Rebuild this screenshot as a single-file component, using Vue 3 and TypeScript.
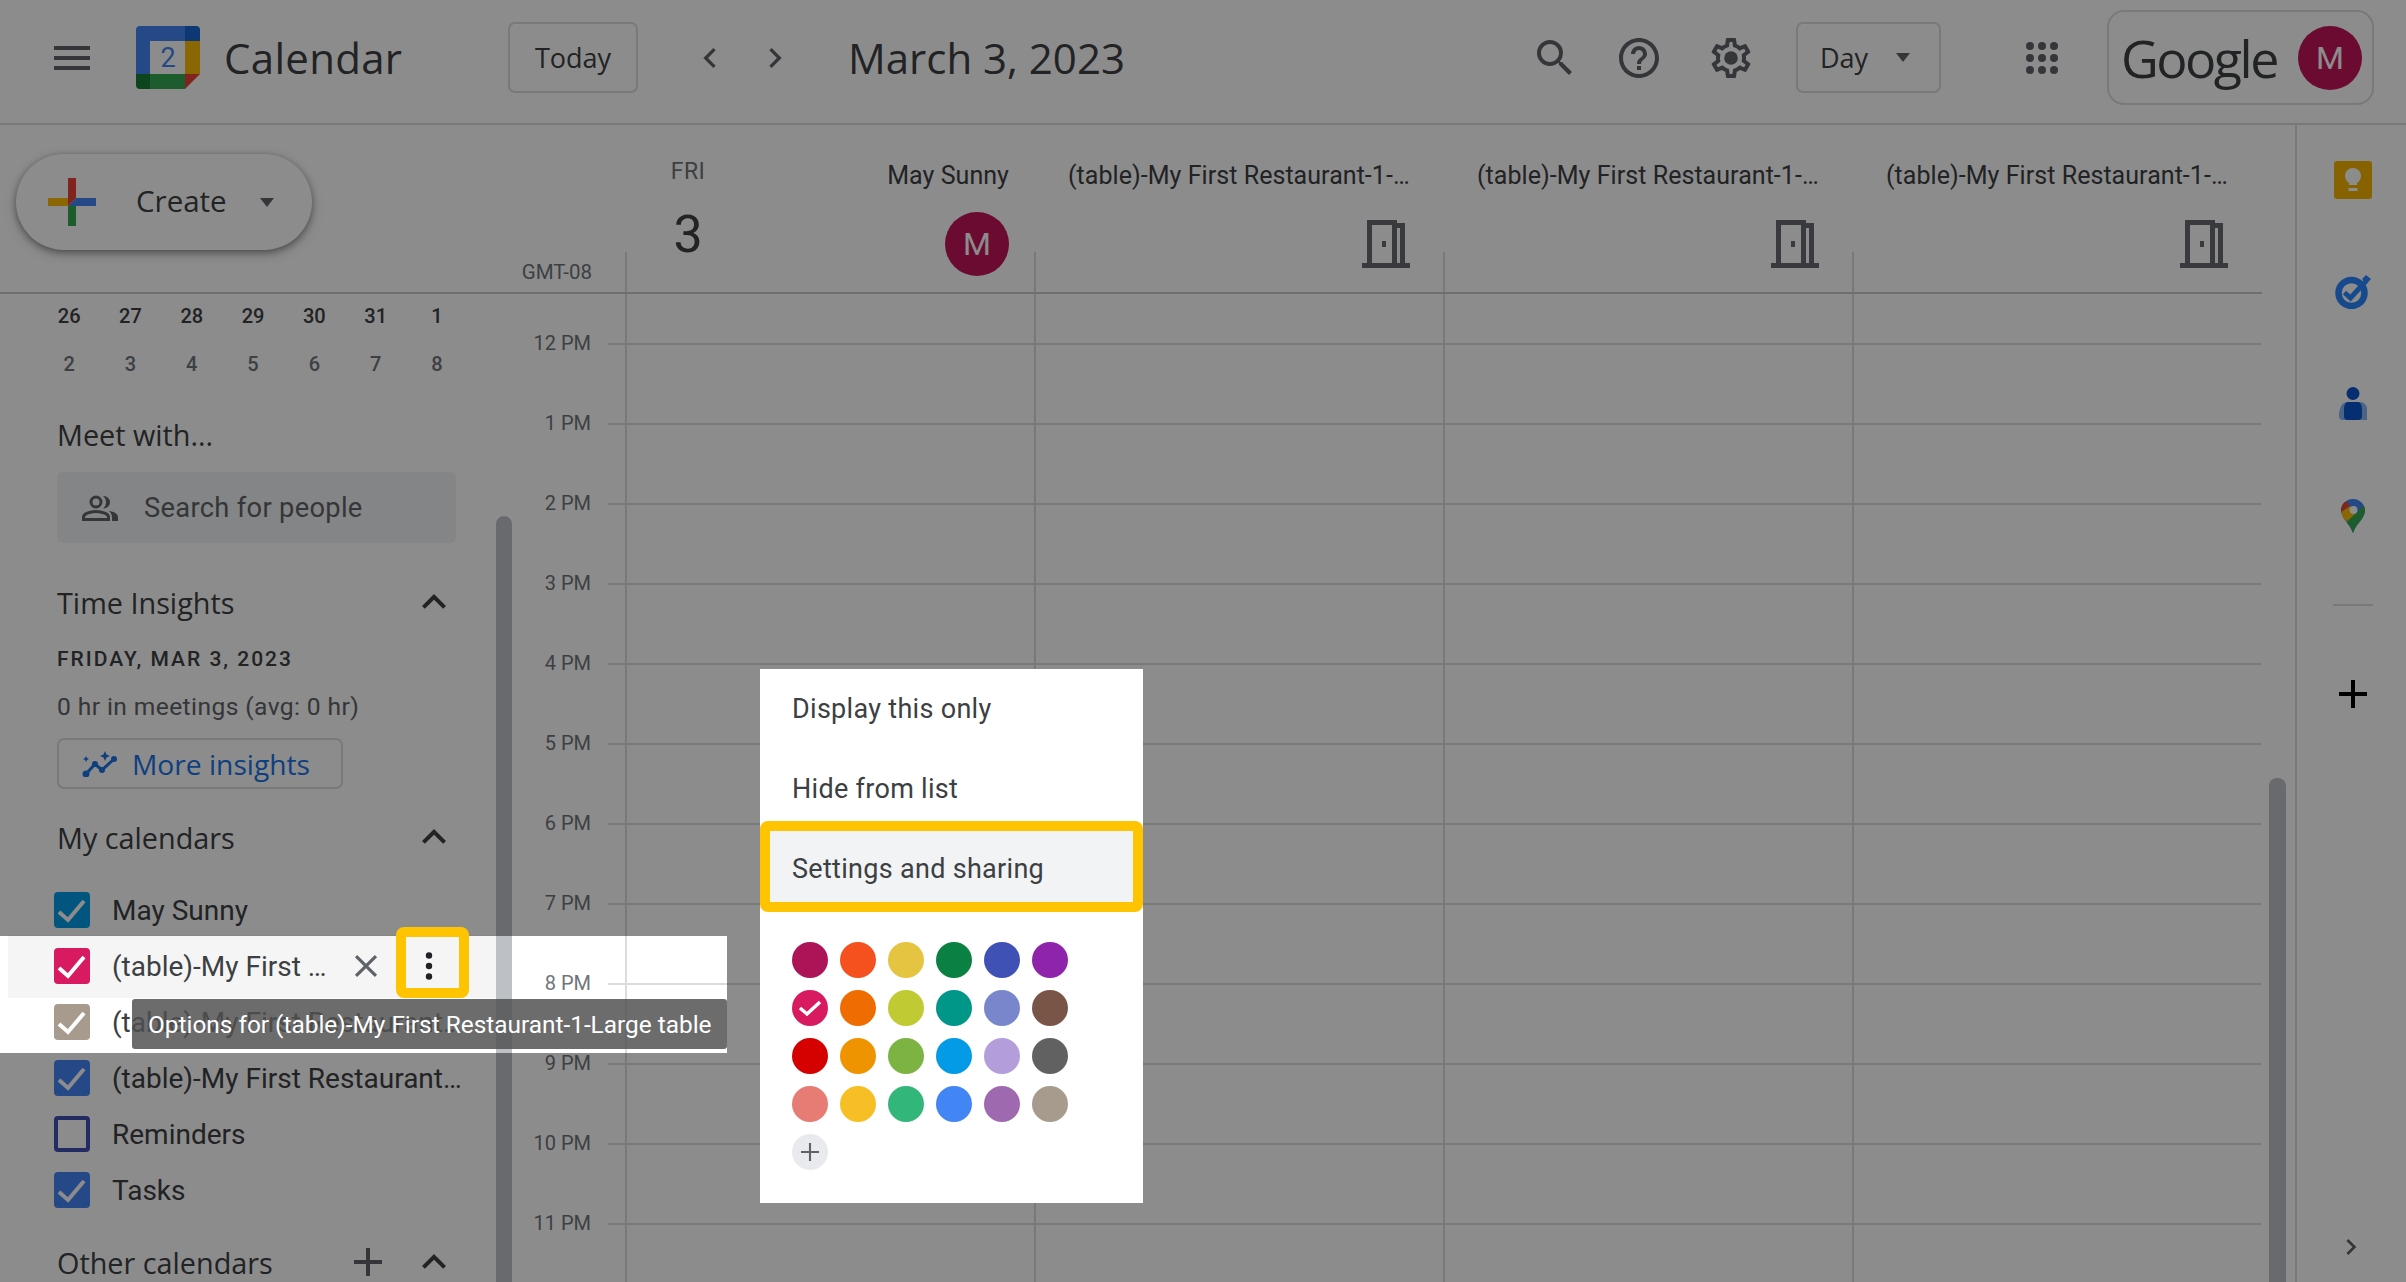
<template>
  <div class="app">
    <header class="topbar">
      <svg class="menu-icon" viewBox="0 0 36 24"><path d="M0 0h36v4H0zM0 10h36v4H0zM0 20h36v4H0z" /></svg>
      <svg class="logo" viewBox="0 0 64 63">
        <path fill="#4285f4" d="M4 0h45v15H14v34H0V4a4 4 0 0 1 4-4z" />
        <path fill="#1967d2" d="M49 0h11a4 4 0 0 1 4 4v11H49z" />
        <path fill="#fbbc04" d="M49 15h15v33H49z" />
        <path fill="#34a853" d="M14 48h35v15H14z" />
        <path fill="#188038" d="M0 48h14v15H4a4 4 0 0 1-4-4z" />
        <path fill="#ea4335" d="M49 48h15L49 63z" />
        <text x="32" y="41" text-anchor="middle" class="logo-num">2</text>
      </svg>
      <span class="product">Calendar</span>
      <button class="outline-btn today">Today</button>
      <svg class="nav prev" viewBox="0 0 24 24"><path d="M15.41 7.41L14 6l-6 6 6 6 1.41-1.41L10.83 12z" /></svg>
      <svg class="nav next" viewBox="0 0 24 24"><path d="M8.59 16.59L10 18l6-6-6-6-1.41 1.41L13.17 12z" /></svg>
      <span class="date-title">March 3, 2023</span>
      <svg class="bar-icon search" viewBox="0 0 24 24"><path d="M15.5 14h-.79l-.28-.27A6.471 6.471 0 0 0 16 9.5 6.5 6.5 0 1 0 9.5 16c1.61 0 3.09-.59 4.23-1.57l.27.28v.79l5 4.99L20.49 19l-4.99-5zm-6 0C7.01 14 5 11.99 5 9.5S7.01 5 9.5 5 14 7.01 14 9.5 11.99 14 9.5 14z" /></svg>
      <svg class="bar-icon help" viewBox="0 0 24 24"><path d="M11 18h2v-2h-2v2zm1-16C6.48 2 2 6.48 2 12s4.48 10 10 10 10-4.48 10-10S17.52 2 12 2zm0 18c-4.41 0-8-3.59-8-8s3.59-8 8-8 8 3.59 8 8-3.59 8-8 8zm0-14c-2.21 0-4 1.79-4 4h2c0-1.1.9-2 2-2s2 .9 2 2c0 2-3 1.75-3 5h2c0-2.25 3-2.5 3-5 0-2.21-1.79-4-4-4z" /></svg>
      <svg class="bar-icon gear" viewBox="0 0 24 24">
        <path d="M19.43 12.98c.04-.32.07-.64.07-.98 0-.34-.03-.66-.07-.98l2.11-1.65c.19-.15.24-.42.12-.64l-2-3.46c-.09-.16-.26-.25-.44-.25-.06 0-.12.01-.17.03l-2.49 1c-.52-.4-1.08-.73-1.69-.98l-.38-2.65C14.46 2.18 14.25 2 14 2h-4c-.25 0-.46.18-.49.42l-.38 2.65c-.61.25-1.17.59-1.69.98l-2.49-1c-.06-.02-.12-.03-.18-.03-.17 0-.34.09-.43.25l-2 3.46c-.13.22-.07.49.12.64l2.11 1.65c-.04.32-.07.65-.07.98 0 .33.03.66.07.98l-2.11 1.65c-.19.15-.24.42-.12.64l2 3.46c.09.16.26.25.44.25.06 0 .12-.01.17-.03l2.49-1c.52.4 1.08.73 1.69.98l.38 2.65c.03.24.24.42.49.42h4c.25 0 .46-.18.49-.42l.38-2.65c.61-.25 1.17-.59 1.69-.98l2.49 1c.06.02.12.03.18.03.17 0 .34-.09.43-.25l2-3.46c.12-.22.07-.49-.12-.64l-2.11-1.65zm-1.98-1.71c.04.31.05.52.05.73 0 .21-.02.43-.05.73l-.14 1.13.89.7 1.08.84-.7 1.21-1.27-.51-1.04-.42-.9.68c-.43.32-.84.56-1.25.73l-1.06.43-.16 1.13-.2 1.35h-1.4l-.19-1.35-.16-1.13-1.06-.43c-.43-.18-.83-.41-1.23-.71l-.91-.7-1.06.43-1.27.51-.7-1.21 1.08-.84.89-.7-.14-1.13c-.03-.31-.05-.54-.05-.74s.02-.43.05-.73l.14-1.13-.89-.7-1.08-.84.7-1.21 1.27.51 1.04.42.9-.68c.43-.32.84-.56 1.25-.73l1.06-.43.16-1.13.2-1.35h1.39l.19 1.35.16 1.13 1.06.43c.43.18.83.41 1.23.71l.91.7 1.06-.43 1.27-.51.7 1.21-1.07.85-.89.7.14 1.13z" />
        <circle cx="12" cy="12" r="3.4" />
      </svg>
      <button class="outline-btn day-btn">Day<span class="caret small"></span></button>
      <svg class="bar-icon apps" viewBox="0 0 48 48">
        <template v-for="y in [12, 24, 36]" :key="y">
          <circle v-for="x in [12, 24, 36]" :key="x" :cx="x" :cy="y" r="4" />
        </template>
      </svg>
      <div class="account">
        <span class="wordmark">Google</span>
        <span class="avatar big">M</span>
      </div>
    </header>

    <div class="body">
      <div class="workspace">
        <div class="head-row">
          <div class="head-left">
            <button class="create">
              <svg class="create-plus" viewBox="0 0 48 48">
                <path fill="#fbbc04" d="M0 20h20v8H0z" />
                <path fill="#34a853" d="M20 28h8v20h-8z" />
                <path fill="#4285f4" d="M20 28l8-8h20v8z" />
                <path fill="#ea4335" d="M20 0h8v20l-8 8z" />
              </svg>
              <span class="create-label">Create</span>
              <span class="caret"></span>
            </button>
            <span class="gmt">GMT-08</span>
          </div>
          <div class="col first">
            <div class="day-block">
              <span class="dow">FRI</span>
              <span class="dom">3</span>
            </div>
            <div class="person">
              <span class="col-name">May Sunny</span>
              <span class="avatar">M</span>
            </div>
          </div>
          <div v-for="n in 3" :key="n" class="col">
            <div class="person">
              <span class="col-name">(table)-My First Restaurant-1-Large table</span>
              <svg class="door" viewBox="0 0 48 48">
                <path d="M0 43h48v5H0zM5 0h30v3h8v41h-5V8h-3v36h-5V5H10v39H5z" />
                <path d="M20 21h4v6h-4z" />
              </svg>
            </div>
          </div>
        </div>

        <div class="main-row">
          <aside class="sidebar">
            <div class="side-content">
              <div class="mini">
                <span v-for="d in miniDays" :key="d.key" :class="{ strong: d.strong }">{{ d.label }}</span>
              </div>
              <h3 class="side-title meet">Meet with...</h3>
              <div class="people">
                <svg class="people-icon" viewBox="0 0 36 26">
                  <circle cx="14" cy="7" r="5" fill="none" stroke-width="3" />
                  <path d="M1.5 24.5V22c0-3 6-5.5 12.5-5.5S26.5 19 26.5 22v2.5z" fill="none" stroke-width="3" />
                  <path class="solid" d="M21 1c4 0 7 2.7 7 6.2s-3 6.3-7 6.3c2-1.6 3-3.8 3-6.3S23 2.6 21 1zM27 16c5 .5 9 3 9 6v4h-6v-4c0-2.5-1.2-4.5-3-6z" />
                </svg>
                <span>Search for people</span>
              </div>
              <div class="section-head insights-head">
                <h3 class="side-title">Time Insights</h3>
                <svg class="chev" viewBox="0 0 24 24"><path d="M12 8l-6 6 1.41 1.41L12 10.83l4.59 4.58L18 14z" /></svg>
              </div>
              <div class="insight-date">FRIDAY, MAR 3, 2023</div>
              <div class="insight-line">0 hr in meetings (avg: 0 hr)</div>
              <button class="more">
                <svg class="more-icon" viewBox="0 0 36 26">
                  <path d="M4 23l9-10 7 6 12-11" fill="none" stroke="#1a73e8" stroke-width="3" />
                  <circle cx="4" cy="23" r="3.5" fill="#1a73e8" />
                  <circle cx="13" cy="13" r="3" fill="#1a73e8" />
                  <circle cx="20" cy="19" r="3" fill="#1a73e8" />
                  <circle cx="32" cy="8" r="3" fill="#1a73e8" />
                  <path fill="#1a73e8" d="M23 0l1.5 3.5L28 5l-3.5 1.5L23 10l-1.5-3.5L18 5l3.5-1.5zM4 5l1 2 2 1-2 1-1 2-1-2-2-1 2-1z" />
                </svg>
                More insights
              </button>
              <div class="section-head cal-head">
                <h3 class="side-title">My calendars</h3>
                <svg class="chev" viewBox="0 0 24 24"><path d="M12 8l-6 6 1.41 1.41L12 10.83l4.59 4.58L18 14z" /></svg>
              </div>
              <ul class="cal-list">
                <li v-for="c in calendars" :key="c.id" class="cal-row" :class="{ hover: c.hover }">
                  <span class="check" :class="{ empty: !c.on }" :style="c.on ? { background: c.color } : { borderColor: c.color }">
                    <svg v-if="c.on" viewBox="0 0 36 36"><path d="M5 20l9 8L30 9" fill="none" stroke="#fff" stroke-width="4" /></svg>
                  </span>
                  <span class="cal-name">{{ c.name }}</span>
                  <template v-if="c.hover">
                    <svg class="close" viewBox="0 0 24 24"><path d="M19 6.41L17.59 5 12 10.59 6.41 5 5 6.41 10.59 12 5 17.59 6.41 19 12 13.41 17.59 19 19 17.59 13.41 12z" /></svg>
                    <svg class="dots" viewBox="0 0 12 40"><circle cx="6" cy="9.5" r="3.2" /><circle cx="6" cy="20" r="3.2" /><circle cx="6" cy="30.5" r="3.2" /></svg>
                  </template>
                </li>
              </ul>
              <div class="section-head other-head">
                <h3 class="side-title">Other calendars</h3>
                <svg class="add" viewBox="0 0 24 24"><path d="M19 13h-6v6h-2v-6H5v-2h6V5h2v6h6v2z" /></svg>
                <svg class="chev" viewBox="0 0 24 24"><path d="M12 8l-6 6 1.41 1.41L12 10.83l4.59 4.58L18 14z" /></svg>
              </div>
            </div>
            <div class="side-thumb"></div>
          </aside>

          <section class="hours">
            <div class="hour-list">
              <div v-for="h in hours" :key="h" class="hour">
                <span class="hour-label"><span>{{ h }}</span></span>
                <div class="hour-cells"></div>
              </div>
            </div>
            <div class="grid-thumb"></div>
          </section>
        </div>
      </div>

      <nav class="rail">
        <svg class="rail-keep" viewBox="0 0 38 38">
          <rect width="38" height="38" rx="3" fill="#f4b400" />
          <circle cx="19" cy="15" r="8" fill="#fff" />
          <path d="M15 21h8v3h-8zM14.5 27h9v3h-9z" fill="#fff" />
        </svg>
        <svg class="rail-tasks" viewBox="0 0 36 34">
          <circle cx="16.5" cy="18" r="13" fill="none" stroke="#2b88ff" stroke-width="6.5" />
          <path d="M9.5 17.5l6 5.5L31 6" fill="none" stroke="#2b88ff" stroke-width="5" />
          <path d="M27 4l4-4 5 4-4 4.5z" fill="#2b88ff" />
        </svg>
        <svg class="rail-contacts" viewBox="0 0 28 33">
          <circle cx="14" cy="6.5" r="6.5" fill="#0b57d0" />
          <path d="M9 15h12c4 0 7 3 7 7v11H4a4 4 0 0 1-4-4c0-8 3-14 9-14z" fill="#8ab4f8" />
          <path d="M9 15h10c3 0 4 4 4 8v6a4 4 0 0 1-4 4H9a4 4 0 0 1-4-4v-6c0-4 1-8 4-8z" fill="#0b57d0" />
        </svg>
        <svg class="rail-maps" viewBox="0 0 24 34">
          <clipPath id="pin"><path d="M12 0C5.4 0 0 5.2 0 11.5c0 8 9 13 12 22.5 3-9.5 12-14.5 12-22.5C24 5.2 18.6 0 12 0z" /></clipPath>
          <g clip-path="url(#pin)">
            <path fill="#4285f4" d="M0 0h24v34H0z" />
            <path fill="#ea4335" d="M-1 14V6L5 2l4 5z" />
            <path fill="#fbbc04" d="M-1 14l10-7 6 8-10 8z" />
            <path fill="#34a853" d="M25 4v31H0l4-10z" />
          </g>
          <circle cx="12.5" cy="11" r="4" fill="#fff" />
        </svg>
        <div class="rail-divider"></div>
        <svg class="rail-add" viewBox="0 0 24 24"><path d="M19 13h-6v6h-2v-6H5v-2h6V5h2v6h6v2z" /></svg>
        <svg class="rail-expand" viewBox="0 0 24 24"><path d="M8.59 16.59L10 18l6-6-6-6-1.41 1.41L13.17 12z" /></svg>
      </nav>
    </div>

    <!-- context menu sits under the dim layer; the layer has a hole over it -->
    <div class="context-menu">
      <div class="menu-item">Display this only</div>
      <div class="menu-item">Hide from list</div>
      <div class="menu-item active">Settings and sharing</div>
      <div class="swatches">
        <span v-for="s in swatches" :key="s" class="swatch" :style="{ background: s }">
          <svg v-if="s === '#d81b60'" viewBox="0 0 36 36"><path d="M8 18l7 6 13-12" fill="none" stroke="#fff" stroke-width="3.5" /></svg>
        </span>
        <span class="swatch plus">
          <svg viewBox="0 0 24 24"><path d="M18 12.7h-5.3V18h-1.4v-5.3H6v-1.4h5.3V6h1.4v5.3H18z" /></svg>
        </span>
      </div>
    </div>

    <div class="dim"></div>
    <div class="mark mark-dots"></div>
    <div class="mark mark-settings"></div>
    <div class="tooltip">Options for (table)-My First Restaurant-1-Large table</div>
  </div>
</template>

<script setup lang="ts">
const prevDays = [26, 27, 28, 29, 30, 31, 1]
const nextDays = [2, 3, 4, 5, 6, 7, 8]

const miniDays = [
  ...prevDays.map((d) => ({ key: `a${d}`, label: d, strong: true })),
  ...nextDays.map((d) => ({ key: `b${d}`, label: d, strong: false })),
]

const longName = "(table)-My First Restaurant-1-Large table"

const calendars = [
  { id: 1, name: "May Sunny", color: "#039be5", on: true, hover: false },
  { id: 2, name: longName, color: "#d81b60", on: true, hover: true },
  { id: 3, name: longName, color: "#a79b8e", on: true, hover: false },
  { id: 4, name: longName, color: "#4285f4", on: true, hover: false },
  { id: 5, name: "Reminders", color: "#3f51b5", on: false, hover: false },
  { id: 6, name: "Tasks", color: "#4285f4", on: true, hover: false },
]

const hours = ["12 PM", "1 PM", "2 PM", "3 PM", "4 PM", "5 PM", "6 PM", "7 PM", "8 PM", "9 PM", "10 PM", "11 PM"]

const swatches = [
  "#ad1457", "#f4511e", "#e4c441", "#0b8043", "#3f51b5", "#8e24aa",
  "#d81b60", "#ef6c00", "#c0ca33", "#009688", "#7986cb", "#795548",
  "#d50000", "#f09300", "#7cb342", "#039be5", "#b39ddb", "#616161",
  "#e67c73", "#f6bf26", "#33b679", "#4285f4", "#9e69af", "#a79b8e",
]
</script>

<style>
html,
body {
  margin: 0;
  background: #fff;
}
</style>

<style scoped>
.app {
  position: relative;
  width: 2406px;
  height: 1282px;
  overflow: hidden;
  display: flex;
  flex-direction: column;
  background: #fff;
  color: #3c4043;
  font-family: Roboto, "Liberation Sans", sans-serif;
}

svg {
  display: block;
  flex: none;
  fill: #5f6368;
}

button {
  font: inherit;
  color: inherit;
  background: none;
  padding: 0;
  margin: 0;
}

/* top bar */
.topbar {
  flex: none;
  height: 125px;
  box-sizing: border-box;
  display: flex;
  align-items: center;
  border-bottom: 2px solid #dadce0;
  padding: 0 32px 8px 0;
}

.menu-icon {
  width: 36px;
  height: 24px;
  margin-left: 54px;
}

.logo {
  width: 64px;
  height: 63px;
  margin-left: 46px;
}

.logo-num {
  font: 400 27px Roboto, sans-serif;
  fill: #4285f4;
}

.product {
  width: 284px;
  margin-left: 24px;
  font: 400 42px "Open Sans", sans-serif;
  letter-spacing: 0.3px;
}

.outline-btn {
  height: 71px;
  box-sizing: border-box;
  border: 2px solid #dadce0;
  border-radius: 7px;
  font: 500 27px "Open Sans", sans-serif;
}

.today {
  width: 130px;
}

.nav {
  width: 40px;
  height: 40px;
}

.prev {
  margin-left: 52px;
}

.next {
  margin-left: 25px;
}

.date-title {
  margin-left: 53px;
  font: 400 42px "Open Sans", sans-serif;
}

.bar-icon {
  width: 48px;
  height: 48px;
}

.search {
  margin-left: auto;
}

.help {
  margin-left: 36px;
}

.gear {
  margin-left: 44px;
}

.day-btn {
  width: 145px;
  margin-left: 41px;
  display: flex;
  align-items: center;
  padding-left: 22px;
}

.apps {
  margin-left: 77px;
}

.account {
  width: 267px;
  height: 95px;
  box-sizing: border-box;
  margin-left: 41px;
  border: 2px solid #dadce0;
  border-radius: 17px;
  display: flex;
  align-items: center;
  justify-content: space-between;
  padding: 0 10px 0 12px;
}

.wordmark {
  font: 500 52px "Open Sans", sans-serif;
  letter-spacing: -2.5px;
}

.caret {
  width: 0;
  height: 0;
  border-style: solid;
  border-width: 9px 7.5px 0;
  border-color: #5f6368 transparent transparent;
}

.caret.small {
  margin-left: 28px;
}

.avatar {
  width: 64px;
  height: 64px;
  border-radius: 50%;
  background: #c4155a;
  color: #fff;
  display: flex;
  align-items: center;
  justify-content: center;
  font-size: 32px;
}

/* body */
.body {
  flex: 1;
  min-height: 0;
  display: flex;
}

.workspace {
  flex: 1;
  min-width: 0;
  display: flex;
  flex-direction: column;
}

.head-row {
  flex: none;
  height: 167px;
  width: 2262px;
  display: flex;
  border-bottom: 2px solid #c8cacd;
}

.head-left {
  width: 625px;
  display: flex;
  justify-content: space-between;
  padding: 29px 33px 8px 16px;
  box-sizing: border-box;
}

.create {
  width: 296px;
  height: 96px;
  border: 0;
  border-radius: 48px;
  box-shadow: 0 2px 6px rgba(60, 64, 67, 0.45), 0 4px 12px rgba(60, 64, 67, 0.3);
  display: flex;
  align-items: center;
  padding-left: 32px;
  font: 500 29.5px "Open Sans", sans-serif;
  background: #fff;
}

.create-plus {
  width: 48px;
  height: 48px;
  margin-right: 40px;
}

.create-label {
  padding-bottom: 3px;
}

.create .caret {
  margin-left: 33px;
}

.gmt {
  align-self: flex-end;
  font-size: 20.5px;
  color: #70757a;
}

.col {
  width: 409px;
  box-sizing: border-box;
  display: flex;
  padding-right: 31px;
  background: linear-gradient(#dadce0, #dadce0) left bottom / 2px 40px no-repeat;
}

.col.first {
  padding-right: 25px;
}

.day-block {
  width: 126px;
  display: flex;
  flex-direction: column;
  align-items: center;
  flex: none;
}

.dow {
  margin-top: 28px;
  font-size: 23px;
  line-height: 38px;
  color: #70757a;
  letter-spacing: 0.5px;
}

.dom {
  margin-top: 16px;
  font-size: 52px;
  line-height: 56px;
  font-weight: 400;
}

.person {
  flex: 1;
  min-width: 0;
  display: flex;
  flex-direction: column;
  align-items: flex-end;
}

.col-name {
  margin-top: 34px;
  max-width: 344px;
  font-size: 25px;
  line-height: 34px;
  white-space: nowrap;
  overflow: hidden;
  text-overflow: ellipsis;
  letter-spacing: 0.05px;
}

.person .avatar {
  margin-top: 19px;
}

.door {
  width: 48px;
  height: 48px;
  margin: 27px 2px 0 0;
  fill: #666b70;
}

.main-row {
  flex: 1;
  min-height: 0;
  display: flex;
  overflow: hidden;
}

/* sidebar */
.sidebar {
  width: 512px;
  flex: none;
  display: flex;
}

.side-content {
  width: 496px;
  flex: none;
}

.side-thumb {
  width: 16px;
  margin-top: 222px;
  background: #bdc1c6;
  border-radius: 8px 8px 0 0;
}

.mini {
  margin-top: -2px;
  padding-left: 38.5px;
  display: grid;
  grid-template-columns: repeat(7, 61.3px);
  grid-auto-rows: 48px;
  font-size: 20px;
  font-weight: 500;
  color: #70757a;
}

.mini span {
  display: flex;
  align-items: center;
  justify-content: center;
}

.mini .strong {
  color: #3c4043;
}

.side-title {
  margin: 0;
  height: 56px;
  display: flex;
  align-items: center;
  font: 500 28.8px "Open Sans", sans-serif;
  color: #3c4043;
}

.meet {
  margin: 18px 0 0 57px;
}

.people {
  margin: 10px 40px 0 57px;
  height: 71px;
  background: #f1f3f4;
  border-radius: 6px;
  display: flex;
  align-items: center;
  font-size: 27.3px;
  color: #5f6368;
  letter-spacing: 0.3px;
}

.people-icon {
  width: 36px;
  height: 26px;
  margin: 0 26px 0 25px;
  stroke: #5f6368;
  fill: none;
}

.people-icon .solid {
  fill: #5f6368;
  stroke: none;
}

.section-head {
  margin-left: 57px;
  padding-right: 38px;
  height: 56px;
  display: flex;
  align-items: center;
  justify-content: space-between;
}

.insights-head {
  margin-top: 31px;
}

.chev {
  width: 48px;
  height: 48px;
  fill: #3c4043;
}

.insight-date {
  margin: 17px 0 0 57px;
  font-size: 21px;
  line-height: 24px;
  font-weight: 500;
  letter-spacing: 2px;
}

.insight-line {
  margin: 21px 0 0 57px;
  font-size: 24.6px;
  line-height: 30px;
  color: #5f6368;
  letter-spacing: 0.4px;
}

.more {
  margin: 16px 0 0 57px;
  width: 286px;
  height: 51px;
  box-sizing: border-box;
  border: 2px solid #dadce0;
  border-radius: 7px;
  display: flex;
  align-items: center;
  padding-left: 23px;
  font: 500 28.2px "Open Sans", sans-serif;
  color: #1a73e8;
}

.more-icon {
  width: 36px;
  height: 26px;
  margin-right: 14px;
  fill: none;
}

.cal-head {
  margin-top: 20px;
}

.cal-list {
  list-style: none;
  margin: 17px 0 0;
  padding: 0;
}

.cal-row {
  height: 56px;
  display: flex;
  align-items: center;
  padding-left: 54px;
  font-size: 28px;
}

.cal-row.hover {
  height: 63px;
  margin: -3.5px 0 -3.5px 8px;
  padding-left: 46px;
  background: #f5f5f5;
}

.check {
  width: 36px;
  height: 36px;
  box-sizing: border-box;
  border-radius: 4px;
  flex: none;
  margin-right: 22px;
}

.check.empty {
  border: 4px solid;
}

.cal-name {
  max-width: 352px;
  white-space: nowrap;
  overflow: hidden;
  text-overflow: ellipsis;
}

.hover .cal-name {
  width: 221px;
}

.close {
  width: 38px;
  height: 38px;
  margin-left: 14px;
}

.dots {
  width: 12px;
  height: 40px;
  margin-left: 38px;
  fill: #202124;
}

.other-head {
  margin-top: 16px;
}

.add {
  width: 48px;
  height: 48px;
  margin-left: auto;
  margin-right: 18px;
}

/* hour grid */
.hours {
  flex: 1;
  min-width: 0;
  display: flex;
  height: 1000px;
}

.hour-list {
  width: 1749px;
  flex: none;
  padding-top: 49px;
  box-sizing: border-box;
  background: linear-gradient(90deg, #dadce0 2px, transparent 2px) 113px 0 / 409px 49px repeat-x;
}

.hour {
  height: 80px;
  display: flex;
}

.hour-label {
  width: 79px;
  text-align: right;
  font-size: 20px;
  color: #70757a;
  line-height: 0;
  margin-right: 17px;
  flex: none;
}

.hour-label span {
  display: inline-block;
}

.hour-cells {
  flex: 1;
  border-top: 2px solid #dadce0;
  background: linear-gradient(90deg, #dadce0 2px, transparent 2px) 17px 0 / 409px 100%;
}

.grid-thumb {
  width: 17px;
  margin: 484px 0 0 8px;
  background: #bdc1c6;
  border-radius: 8px 8px 0 0;
  height: 600px;
}

/* right rail */
.rail {
  width: 111px;
  flex: none;
  box-sizing: border-box;
  border-left: 2px solid #dadce0;
  display: flex;
  flex-direction: column;
  align-items: center;
  padding-left: 2px;
}

.rail-keep {
  width: 38px;
  height: 38px;
  margin-top: 36px;
}

.rail-tasks {
  width: 36px;
  height: 34px;
  margin-top: 76px;
}

.rail-contacts {
  width: 28px;
  height: 33px;
  margin-top: 78px;
}

.rail-maps {
  width: 24px;
  height: 34px;
  margin-top: 79px;
}

.rail-divider {
  width: 40px;
  height: 2px;
  margin-top: 71px;
  background: #dadce0;
}

.rail-add {
  width: 48px;
  height: 48px;
  margin-top: 64px;
  fill: #000;
}

.rail-expand {
  width: 32px;
  height: 32px;
  margin-top: auto;
  margin-bottom: 19px;
  margin-right: 4px;
}

/* popup */
.context-menu {
  position: absolute;
  left: 760px;
  top: 669px;
  width: 383px;
  height: 534px;
  background: #fff;
  font-size: 27px;
  letter-spacing: 0.3px;
}

.menu-item {
  height: 80px;
  display: flex;
  align-items: center;
  padding-left: 32px;
}

.menu-item.active {
  background: #f1f3f4;
}

.swatches {
  margin: 33px 0 0 32px;
  display: grid;
  grid-template-columns: repeat(6, 36px);
  grid-auto-rows: 36px;
  gap: 12px;
}

.swatch {
  border-radius: 50%;
}

.swatch.plus {
  background: #e8eaed;
}

.swatch svg {
  width: 36px;
  height: 36px;
}

/* dim layer with holes for the highlighted row and the menu */
.dim {
  position: absolute;
  inset: 0;
  background: rgba(0, 0, 0, 0.45);
  clip-path: path(evenodd, "M0 0H2406V1282H0Z M0 936H727V1053H0Z M760 669H1143V1203H760Z");
}

.mark {
  position: absolute;
  box-sizing: border-box;
  border: 10px solid #ffc400;
  border-radius: 8px;
}

.mark-dots {
  left: 396px;
  top: 927px;
  width: 73px;
  height: 71px;
}

.mark-settings {
  left: 760px;
  top: 821px;
  width: 383px;
  height: 91px;
}

.tooltip {
  position: absolute;
  left: 132px;
  top: 999px;
  width: 595px;
  height: 50px;
  box-sizing: border-box;
  padding-left: 16px;
  display: flex;
  align-items: center;
  background: rgba(78, 78, 78, 0.83);
  border-radius: 3px;
  color: #fff;
  font-size: 24.4px;
  white-space: nowrap;
}
</style>
